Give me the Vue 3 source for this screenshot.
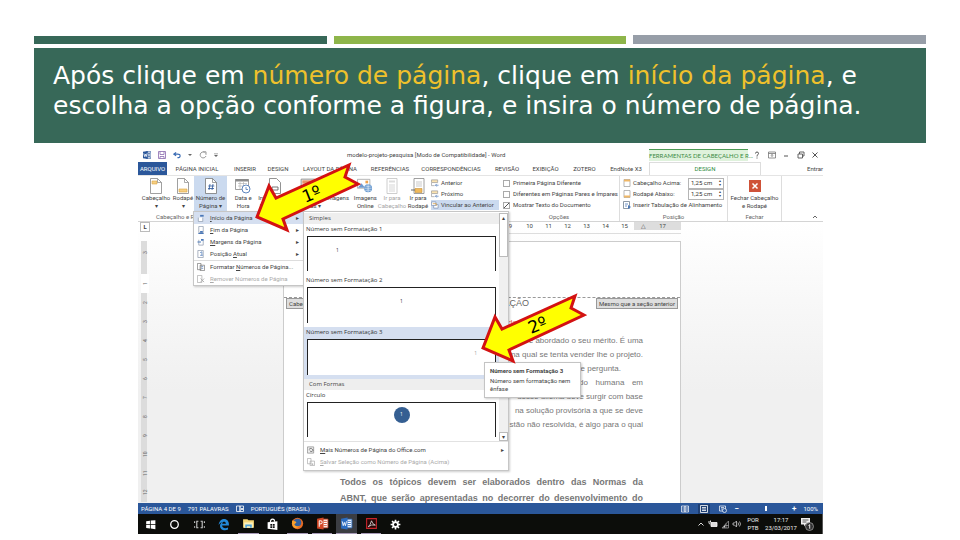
<script setup>
import { h } from 'vue'

const glyphs = {
  word: { box: '0 0 10 10', parts: [['M4 1h6v8H4z', '#fff', '#2b579a'], ['M6 3h3M6 5h3M6 7h3', 'none', '#2b579a'], ['M0 1l6-1v10L0 9z', '#2b579a'], ['M1 3l1 4 1-3 1 3 1-4', 'none', '#fff']] },
  save: { box: '0 0 8 8', parts: [['M.5.5h7v7h-7zM2 .5v3h4v-3M2 7.5v-2h4v2', 'none', '#8a6aae', .8]] },
  undo: { box: '0 0 9 8', parts: [['M3.500 1L1 3l2.500 2M1 3h4q3 0 3 2t-3 2', 'none', '#3b6cb4', 1.3]] },
  redo: { box: '0 0 8 8', parts: [['M6.500 2A3 3 0 1 0 7 5M4 .8h3v3', 'none', '#9a9a9a']] },
  caret: { box: '0 0 4 4', parts: [['M0 1h4L2 3z', '#666']] },
  more: { box: '0 0 5 5', parts: [['M0 1h5', 'none', '#666', .7], ['M0 2.500h5L2.500 5z', '#666']] },
  header: { box: '0 0 12 16', parts: [['M.5.5h7l4 4v11H.5z', '#fff', '#888', .8], ['M2 3h5v3H2z', '#f6cf83', '#dba441', .6], ['M7.500.5v4h4', 'none', '#888', .7]] },
  footer: { box: '0 0 12 16', parts: [['M.5.5h7l4 4v11H.5z', '#fff', '#888', .8], ['M2 11h8v3H2z', '#f6cf83', '#dba441', .6], ['M7.500.5v4h4', 'none', '#888', .7]] },
  number: { box: '0 0 12 16', parts: [['M.5.5h7l4 4v11H.5z', '#fff', '#777', .8], ['M7.500.5v4h4', 'none', '#777', .7], ['M5 6l-1 6M8 6l-1 6M3.300 8h6M3 10.500h6', 'none', '#2b579a', .8]] },
  date: { box: '0 0 16 16', parts: [['M.5 1.500h13v10H.5z', '#fff', '#888', .8], ['M.5 1h13v2.500H.5z', '#8b8b8b'], ['M3 5.500h9M3 8h6M5 4v7M8.500 4v7', 'none', '#aaa', .6], ['M11 7a4 4 0 1 1 0 8a4 4 0 1 1 0-8', '#fff', '#4b78b8', .9], ['M11 9v2.500h2', 'none', '#4b78b8', .8]] },
  info: { box: '0 0 12 16', parts: [['M.5.5h7l4 4v11H.5z', '#fff', '#777', .8], ['M3 9h6v3H3z', 'none', '#555', .8]] },
  parts: { box: '0 0 14 14', parts: [['M1 1h12v12H1z', '#fff', '#888', .8], ['M2 2h10v3H2z', '#e7946a'], ['M3 7h8M3 9h8M3 11h6', 'none', '#999', .6]] },
  picture: { box: '0 0 16 14', parts: [['M.5.5h14v10H.5z', '#fff', '#999', .8], ['M1 10l4-5 3 3 2-2 4 4z', '#7fb27f'], ['M10.500 2h2v2h-2z', '#f0a04b']] },
  online: { box: '0 0 18 16', parts: [['M.5.5h14v10H.5z', '#fff', '#999', .8], ['M1 10l4-5 4 5z', '#6f9ad0'], ['M9.500 2h3v3h-3z', '#f0a04b'], ['M12.500 6a4.500 4.500 0 1 1 0 9a4.500 4.500 0 1 1 0-9', '#6a9bd1'], ['M8.500 10.500h8M12.500 6v9M9.500 8q3 1 6 0M9.500 13q3-1 6 0', 'none', '#fff', .6]] },
  gotoHead: { box: '0 0 14 16', parts: [['M2 .5h10v15H2z', '#fff', '#c2c2c2', .8], ['M4 2.500h6v2H4z', '#ddd'], ['M4 7h6M4 9h6M4 11h6M4 13h6', 'none', '#ccc', .8]] },
  gotoFoot: { box: '0 0 14 16', parts: [['M3 .5h10v15H3z', '#fff', '#888', .8], ['M5 4h6M5 6h6M5 8h6', 'none', '#bbb', .8], ['M4 10.500h7v4H4z', '#f0b95a', '#c8923a', .6], ['M0 12h4', 'none', '#666']] },
  prev: { box: '0 0 9 8', parts: [['M.5.5h7v3h-7z', '#fbe3b0', '#999', .8], ['M.5 4v3H4', 'none', '#999', .8], ['M8.500 6.500H5M6.500 5L5 6.500 6.500 8', 'none', '#4b78b8', .8]] },
  link: { box: '0 0 9 8', parts: [['M.5.5h5v4h-5zM3 4.500v3h5v-4H6', '#fff', '#7f93b5', .8], ['M2 2.500h4v2.500', 'none', '#d69a3a', .8]] },
  posHead: { box: '0 0 8 8', parts: [['M1 .5h6v7H1z', '#fff', '#999', .7], ['M1 .5h6v2H1z', '#efb766']] },
  posFoot: { box: '0 0 8 8', parts: [['M1 .5h6v7H1z', '#fff', '#999', .7], ['M1 5.500h6v2H1z', '#efb766']] },
  tabAlign: { box: '0 0 8 8', parts: [['M.5.5h6v7h-6z', '#fff', '#6f7f90', .8], ['M2 3h3M2 5h2', 'none', '#4b78b8', .8], ['M5 4l3 2-3 2z', '#4b78b8']] },
  close: { box: '0 0 12 12', parts: [['M0 0h12v12H0z', '#cf5238'], ['M3.500 3.500l5 5M8.500 3.500l-5 5', 'none', '#fff', 1.5]] },
  help: { box: '0 0 8 8', parts: [['M2.500 2.500q0-1.500 1.500-1.500t1.500 1.500q0 1-1.500 2v1M4 6.500v1', 'none', '#555']] },
  ribbonOpt: { box: '0 0 8 8', parts: [['M.5 1h7v6h-7zM.5 2.500h7M4 6V3.500M3 4.500l1-1 1 1', 'none', '#666', .7]] },
  mini: { box: '0 0 8 8', parts: [['M2 5h4', 'none', '#555']] },
  restore: { box: '0 0 8 8', parts: [['M1 3h4.500v4H1zM2.500 3V1H7v4H5.500', 'none', '#555', .9]] },
  exit: { box: '0 0 8 8', parts: [['M1.500 1.500l5 5M6.500 1.500l-5 5', 'none', '#555']] },
  up: { box: '0 0 8 8', parts: [['M2 5l2-2 2 2', 'none', '#555', .9]] },
  pTop: { box: '0 0 8 9', parts: [['M1 4v4.500h5V4', '#fff', '#8a97ab', .8], ['M3 1h4v2H3z', '#4b78b8']] },
  pBottom: { box: '0 0 8 9', parts: [['M1.500.5h5v7h-5z', '#fff', '#8a97ab', .8], ['M3 5.500h3v2H3zM1 8h6v1H1z', '#4b78b8']] },
  pMargin: { box: '0 0 8 9', parts: [['M1.500 2v6h5V3', '#fff', '#8a97ab', .8], ['M0 4h4v1H0zM4 1h3v2H4z', '#4b78b8']] },
  pCurrent: { box: '0 0 8 9', parts: [['M.5.5h6v8h-6z', '#fff', '#8a97ab', .8], ['M3 3l2-1v4M3 6h3', 'none', '#4b78b8', .8]] },
  pFormat: { box: '0 0 9 9', parts: [['M.5.5h4v7h-4zM3.500 2.500h5v6h-5z', '#fff', '#777', .8], ['M5 4h2M5 6h2', 'none', '#4b78b8', .8]] },
  pRemove: { box: '0 0 9 9', parts: [['M.5.5h5v8h-5z', '#fff', '#aaa', .8], ['M4 4l4 4M8 4L4 8', 'none', '#aaa']] },
  office: { box: '0 0 9 9', parts: [['M.5 1h7v7h-7z', '#eee', '#888', .8], ['M2 4q3-3 5 1M7 5q-3 3-4 0', 'none', '#666', .9]] },
  saveSel: { box: '0 0 9 9', parts: [['M.5.5h4v6h-4zM3.500 3.500h5v5h-5z', '#fff', '#aaa', .8], ['M5 6h2v2H5z', '#bbb']] },
  proof: { box: '0 0 8 8', parts: [['M.5 1h3.500v5.500H.5zM4 1h3.500v5.500H4zM5 3l2 2M7 3L5 5', 'none', '#fff', .8]] },
  read: { box: '0 0 8 8', parts: [['M.5 1h3.500v6H.5zM4 1h3.500v6H4zM1.500 3h2M1.500 5h2M5 3h2M5 5h2', 'none', '#fff', .7]] },
  print: { box: '0 0 8 8', parts: [['M.5.5h7v7h-7zM2 2.500h4M2 4h4M2 5.500h4', 'none', '#fff', .8]] },
  web: { box: '0 0 8 8', parts: [['M.5 1h6v5h-6zM2 2.500h3M2 4h2', 'none', '#fff', .7], ['M5.500 3.500a2 2 0 1 1 0 4a2 2 0 1 1 0-4', '#2b579a', '#fff', .7]] },
  windows: { box: '0 0 12 12', parts: [['M2 3l3.500-.5V5.700H2zM6.200 2.300L10.500 2v3.700H6.200zM2 6.400h3.500v3.300L2 9.200zM6.200 6.400h4.300V10.300L6.200 9.800z', '#fff']] },
  cortana: { box: '0 0 12 12', parts: [['M6 2.500a3.500 3.500 0 1 1 0 7a3.500 3.500 0 1 1 0-7', 'none', '#fff', 1.2]] },
  task: { box: '0 0 12 12', parts: [['M5 3H3.500v6H5M7 3h1.500v6H7M1.500 3v1.500M1.500 7.500V9M10.500 3v1.500M10.500 7.500V9', 'none', '#ccc', 1]] },
  edge: { box: '0 0 12 12', parts: [['M1.500 6.500C2 2.500 4.500 1 6.500 1 9.500 1 11 3.300 11 6v1H4.700c.2 2.500 3.300 3 5.500 1.700v2C6.500 12.500 2.500 10.500 2.800 7 2.900 5.500 3.800 4.500 5 4c-1.500.2-2.700 1-3.500 2.500zM4.800 5.200h3.400C8.100 3 5 3 4.800 5.200z', '#2388d8']] },
  folder: { box: '0 0 12 12', parts: [['M1 2h4l1 1h5v7H1z', '#f5d576'], ['M2 5h8v5H2z', '#fff2bd'], ['M3 7h6v3H7.500V8.500h-3V10H3z', '#4fa3d9']] },
  store: { box: '0 0 12 12', parts: [['M1.500 4l9-1v8l-9-1z', '#fff'], ['M4 4q0-3 2-3t2 2.500', 'none', '#fff', 1], ['M4 5.500h1.700v1.700H4zM6.300 5.500H8v1.700H6.300zM4 7.700h1.700v1.500H4zM6.300 7.700H8v1.500H6.300z', '#111']] },
  firefox: { box: '0 0 12 12', parts: [['M6 .8a5.200 5.200 0 1 1 0 10.400A5.200 5.200 0 1 1 6 .8', '#e66b24'], ['M6 1.500a3.500 3.500 0 1 1 0 7a3.500 3.500 0 1 1 0-7', '#315f9e'], ['M1 3q1 1 3 1l1 1-2 2q2 3 5 1-2 3-5 2Q.5 8 1 3z', '#f7a02d']] },
  ppt: { box: '0 0 12 12', parts: [['M6 2h5v8H6z', '#fff', '#d24726', .8], ['M7 4h3M7 6h3M7 8h3', 'none', '#d24726', .8], ['M1 1.500l6-1v11l-6-1z', '#d24726'], ['M3 9V3.500h1.500q1.200 0 1.200 1.400T4.500 6.300H3', 'none', '#fff', .9]] },
  wordBig: { box: '0 0 12 12', parts: [['M6 2h5v8H6z', '#fff', '#2b6cc0', .8], ['M7 4h3M7 6h3M7 8h3', 'none', '#2b6cc0', .8], ['M1 1.500l6-1v11l-6-1z', '#2b6cc0'], ['M2 4l1 4 1-3 1 3 1-4', 'none', '#fff', .8]] },
  acrobat: { box: '0 0 12 12', parts: [['M1.500 1.500h9v9h-9z', '#240606', '#c8252b', 1], ['M3 9q2-1.500 3-5.500Q7 7 9.500 7.500 6 6.500 3 9', 'none', '#eee', .7]] },
  gear: { box: '0 0 12 12', parts: [['M6 1.500v9M1.500 6h9M2.800 2.800l6.400 6.400M9.200 2.800L2.800 9.200', 'none', '#fff', 1.5], ['M6 3a3 3 0 1 1 0 6a3 3 0 1 1 0-6', '#fff'], ['M6 4.600a1.400 1.400 0 1 1 0 2.800a1.400 1.400 0 1 1 0-2.800', '#111']] },
  chevron: { box: '0 0 10 10', parts: [['M2.500 6.500L5 4l2.500 2.500', 'none', '#ddd', 1]] },
  battery: { box: '0 0 10 10', parts: [['M3 3.500h6v4H3z', '#ddd', '#fff', .8], ['M1 2v2q0 1 1.500 1M2.500 1.500v2', 'none', '#fff', .9]] },
  wifi: { box: '0 0 10 10', parts: [['M2 9L8.500 2v7z', 'none', '#999', .8], ['M3 8.500l2-2.200V8.500z', '#ddd'], ['M6 4.500V9M4.500 6.500h4', 'none', '#aaa', .7]] },
  sound: { box: '0 0 10 10', parts: [['M1 4h1.500L4.500 2v6L2.500 6H1zM6 3.500q1 1.500 0 3M7.500 2.500q2 2.500 0 5', 'none', '#ccc', .8]] },
  notify: { box: '0 0 14 14', parts: [['M1 1h9v6.500H5.500L4 9.500v-2H1z', '#eee'], ['M2.500 3h6M2.500 5h4', 'none', '#333', .8], ['M9.500 5.500a4 4 0 1 1 0 8a4 4 0 1 1 0-8', '#333', '#aaa', .7], ['M8.500 8.500l1.200-.8v4', 'none', '#fff', .9]] }
}

const Icon = (props) => {
  const g = glyphs[props.name]
  return h('svg', { viewBox: g.box, class: 'icon', 'aria-hidden': 'true' },
    g.parts.map(([d, fill, stroke, width]) =>
      h('path', { d, fill, stroke: stroke || 'none', 'stroke-width': width || 1 })))
}
Icon.props = ['name']

const tabs = ['PÁGINA INICIAL', 'INSERIR', 'DESIGN', 'LAYOUT DA PÁGINA', 'REFERÊNCIAS', 'CORRESPONDÊNCIAS', 'REVISÃO', 'EXIBIÇÃO', 'ZOTERO', 'EndNote X3']
const insertTools = [
  { icon: 'date', top: 'Data e', bottom: 'Hora' },
  { icon: 'info', top: 'Informações', bottom: 'Documento' },
  { icon: 'parts', top: 'Partes', bottom: 'Rápidas ▾' },
  { icon: 'picture', top: 'Imagens', bottom: '' },
  { icon: 'online', top: 'Imagens', bottom: 'Online' }
]
const options = [
  { id: 'opt-first', text: 'Primeira Página Diferente', on: false },
  { id: 'opt-even', text: 'Diferentes em Páginas Pares e Ímpares', on: false },
  { id: 'opt-show', text: 'Mostrar Texto do Documento', on: true }
]
const menu = [
  { icon: 'pTop', key: 'I', text: 'nício da Página', sub: true, cls: 'chosen' },
  { icon: 'pBottom', key: 'F', text: 'im da Página', sub: true },
  { icon: 'pMargin', key: 'M', text: 'argens da Página', sub: true },
  { icon: 'pCurrent', pre: 'Posição ', key: 'A', text: 'tual', sub: true },
  { icon: 'pFormat', pre: 'Formatar ', key: 'N', text: 'úmeros de Página...', cls: 'ruled' },
  { icon: 'pRemove', key: 'R', text: 'emover Números de Página', cls: 'off' }
]
const samples = [
  { name: 'Número sem Formatação 1', cls: 'at-left' },
  { name: 'Número sem Formatação 2', cls: 'at-mid' },
  { name: 'Número sem Formatação 3', cls: 'at-right' }
]
const bodyLines = [
  { text: 'é abordado o seu mérito. É uma' },
  { text: 'na qual se tenta vender lhe o projeto.' },
  { text: 'e pergunta.', cls: 'short' },
  { text: 'do humana em', cls: 'spread' },
  { text: 'desse dilema deve surgir com base' },
  { text: 'na solução provisória a que se deve' },
  { text: 'stão não resolvida, é algo para o qual' }
]
const apps = ['windows', 'cortana', 'task', 'edge', 'folder', 'store', 'firefox', 'ppt', 'wordBig', 'acrobat', 'gear']
const openApps = ['folder', 'firefox', 'ppt', 'wordBig', 'acrobat']
const arrowPoints = '2,55 14,24 21,36 94,3 90,15 103,22 28,57 32,68'
</script>

<template>
  <main class="slide">
    <div class="stripes"><i class="s1"></i><i class="s2"></i><i class="s3"></i></div>
    <header class="banner">
      <h1>Após clique em <em>número de página</em>, clique em <em>início da página</em>, e<br>escolha a opção conforme a figura, e insira o número de página.</h1>
    </header>

    <section class="screen">
      <div class="titlebar">
        <div class="quick">
          <Icon name="word" /><Icon name="save" /><Icon name="undo" /><Icon name="caret" class="small" /><Icon name="redo" /><Icon name="more" class="small" />
        </div>
        <div class="doc-name">modelo-projeto-pesquisa [Modo de Compatibilidade] - Word</div>
        <div class="context">FERRAMENTAS DE CABEÇALHO E R...</div>
        <div class="window-tools"><Icon name="help" /><Icon name="ribbonOpt" /><Icon name="mini" /><Icon name="restore" /><Icon name="exit" /></div>
      </div>

      <nav class="tabs">
        <button class="file">ARQUIVO</button>
        <button v-for="t in tabs" :key="t">{{ t }}</button>
        <button class="active">DESIGN</button>
        <a href="#entrar">Entrar</a>
      </nav>

      <div class="ribbon">
        <div class="group">
          <div class="tools head-tools">
            <button class="big"><Icon name="header" /><span>Cabeçalho</span><span>▾</span></button>
            <button class="big"><Icon name="footer" /><span>Rodapé</span><span>▾</span></button>
            <button class="big lit"><Icon name="number" /><span>Número de</span><span>Página ▾</span></button>
          </div>
          <div class="caption">Cabeçalho e Rodapé</div>
        </div>
        <div class="group">
          <div class="tools insert-tools">
            <button v-for="(t, i) in insertTools" :key="i" class="big"><Icon :name="t.icon" /><span>{{ t.top }}</span><span>{{ t.bottom }}</span></button>
          </div>
        </div>
        <div class="group">
          <div class="tools nav-tools">
            <button class="big dim" disabled><Icon name="gotoHead" /><span>Ir para</span><span>Cabeçalho</span></button>
            <button class="big"><Icon name="gotoFoot" /><span>Ir para</span><span>Rodapé</span></button>
            <div class="stack">
              <button><Icon name="prev" />Anterior</button>
              <button><Icon name="prev" />Próximo</button>
              <button class="lit"><Icon name="link" />Vincular ao Anterior</button>
            </div>
          </div>
        </div>
        <div class="group">
          <div class="tools stack checks">
            <label v-for="o in options" :key="o.id" :for="o.id"><input :id="o.id" type="checkbox" :checked="o.on">{{ o.text }}</label>
          </div>
          <div class="caption">Opções</div>
        </div>
        <div class="group lined">
          <div class="tools stack place">
            <div class="measure"><Icon name="posHead" /><label for="m-top">Cabeçalho Acima:</label><span class="spin"><input id="m-top" type="text" value="1,25 cm"><i>▴<br>▾</i></span></div>
            <div class="measure"><Icon name="posFoot" /><label for="m-bottom">Rodapé Abaixo:</label><span class="spin"><input id="m-bottom" type="text" value="1,25 cm"><i>▴<br>▾</i></span></div>
            <button><Icon name="tabAlign" />Inserir Tabulação de Alinhamento</button>
          </div>
          <div class="caption">Posição</div>
        </div>
        <div class="group lined">
          <div class="tools single"><button class="big end"><Icon name="close" /><span>Fechar Cabeçalho</span><span>e Rodapé</span></button></div>
          <div class="caption">Fechar</div>
        </div>
        <div class="group lined fold"><Icon name="up" /></div>
      </div>

      <div class="workspace">
        <div class="v-ruler">
          <span class="corner">L</span>
          <div class="v-scale"><span class="cap">3</span><span class="gap white"></span><span class="white">1</span><span v-for="n in 11" :key="n">{{ n + 1 }}</span></div>
        </div>
        <div class="paper-column">
          <div class="h-ruler"><span>9</span><span>10</span><span>11</span><span>12</span><span>13</span><span>14</span><span>15</span><span class="edge">△</span><span class="edge">17</span><span class="edge rest"></span></div>
          <article class="paper">
            <div class="page-head"><span class="tag">Cabeçalho</span><span class="tag">Mesmo que a seção anterior</span></div>
            <h2>AÇÃO</h2>
            <p class="note">do</p>
            <div class="body"><p v-for="l in bodyLines" :key="l.text" :class="l.cls">{{ l.text }}</p></div>
            <div class="strong">
              <p>Todos os tópicos devem ser elaborados dentro das Normas da</p>
              <p>ABNT, que serão apresentadas no decorrer do desenvolvimento do</p>
            </div>
          </article>
        </div>
      </div>

      <footer class="status">
        <span>PÁGINA 4 DE 9</span><span>791 PALAVRAS</span><Icon name="proof" /><span>PORTUGUÊS (BRASIL)</span>
        <div class="views"><Icon name="read" /><span class="on"><Icon name="print" /></span><Icon name="web" /></div>
        <div class="zoom"><b>−</b><i></i><b>+</b></div>
        <span class="percent">100%</span>
      </footer>

      <div class="taskbar">
        <div class="apps"><button v-for="a in apps" :key="a" :aria-label="a" :class="{ open: openApps.includes(a), front: a === 'wordBig' }"><Icon :name="a" /></button></div>
        <div class="tray">
          <Icon name="chevron" /><Icon name="battery" /><Icon name="wifi" /><Icon name="sound" />
          <span class="lang">POR<br>PTB</span><span class="clock">17:17<br>23/03/2017</span><Icon name="notify" class="bell" />
        </div>
      </div>

      <div class="menu">
        <button v-for="m in menu" :key="m.icon" :class="m.cls"><Icon :name="m.icon" /><span>{{ m.pre }}<u>{{ m.key }}</u>{{ m.text }}</span><b v-if="m.sub">▸</b></button>
      </div>

      <div class="gallery">
        <div class="gallery-view">
          <div class="samples">
            <div class="band">Simples</div>
            <button v-for="s in samples" :key="s.name" class="sample" :class="s.cls"><span>{{ s.name }}</span><span class="sheet"><i>1</i></span></button>
            <div class="band">Com Formas</div>
            <button class="sample shape"><span>Círculo</span><span class="sheet"><i>1</i></span></button>
          </div>
          <div class="scroll"><span class="thumb">▴</span><span class="down">▾</span></div>
        </div>
        <div class="gallery-foot">
          <button><Icon name="office" /><span><u>M</u>ais Números de Página do Office.com</span><b>▸</b></button>
          <button class="off"><Icon name="saveSel" /><span><u>S</u>alvar Seleção como Número de Página (Acima)</span></button>
        </div>
      </div>

      <div class="tooltip"><strong>Número sem Formatação 3</strong><span>Número sem formatação nem ênfase</span></div>

      <div class="arrow first"><svg viewBox="0 0 106 72"><polygon :points="arrowPoints" /></svg><span>1º</span></div>
      <div class="arrow second"><svg viewBox="0 0 106 72"><polygon :points="arrowPoints" /></svg><span>2º</span></div>
    </section>
  </main>
</template>

<style>
body { margin: 0; background: #fff; }
</style>

<style scoped>
* { box-sizing: border-box; }
.slide { padding: 35px 34px 6px; font-family: Roboto, "Noto Sans", sans-serif; }
.stripes { display: grid; grid-template-columns: repeat(3, 1fr); gap: 7px; align-items: end; height: 9px; }
.stripes i { height: 8px; }
.s1 { background: #376858; }
.s2 { background: #8eb54a; }
.stripes .s3 { background: #979ea8; height: 9px; }
.banner { background: #376858; margin-top: 4px; height: 95px; padding: 13px 19px; }
h1 { margin: 0; font: 400 25px/30px "DejaVu Sans", Verdana, sans-serif; color: #fff; white-space: nowrap; }
h1 em { font-style: normal; color: #efc12c; }

.screen { position: relative; margin: 5px 103px 0 104px; font-size: 6px; line-height: 8px; color: #444; white-space: nowrap; }
button { border: 0; background: none; padding: 0; margin: 0; font: inherit; color: inherit; white-space: nowrap; }
.icon { display: block; flex: none; width: 8px; height: 8px; }

.titlebar { display: grid; grid-template-columns: 209fr 302fr 99fr 75fr; height: 14px; align-items: center; }
.titlebar > * { min-width: 0; }
.quick { display: flex; align-items: center; gap: 7px; padding-left: 5px; }
.quick .small { width: 4px; height: 4px; }
.context { height: 12px; padding: 2px 0; border-top: 1px solid #4c9a55; background: #dff2dc; color: #3c8a45; text-align: center; font-family: "Liberation Sans Narrow", Lato, sans-serif; }
.window-tools { display: flex; justify-content: space-between; padding: 0 4px 0 5px; }

.tabs { display: grid; grid-template-columns: 29fr 60fr 36fr 30fr 74fr 46fr 76fr 36fr 41fr 37fr 46fr 112fr 62fr; height: 13px; align-items: stretch; }
.tabs > * { min-width: 0; display: flex; align-items: center; justify-content: center; }
.tabs .file { background: #2b579a; color: #fff; }
.tabs .active { border: 1px solid #ddd; border-bottom: 0; color: #2f8a40; }
.tabs a { color: #444; text-decoration: none; justify-content: flex-end; }

.ribbon { display: grid; grid-template-columns: 91fr 150fr 120fr 120fr 108fr 54fr 42fr; height: 47px; border-bottom: 1px solid #d4d4d4; border-top: 1px solid #e4e4e4; }
.group { display: flex; flex-direction: column; min-width: 0; }
.lined { border-left: 1px solid #ddd; }
.tools { height: 37px; }
.caption { text-align: center; color: #666; }
.head-tools { display: grid; grid-template-columns: 32fr 22fr 33fr; padding-left: 2px; padding-right: 2px; }
.insert-tools { display: grid; grid-template-columns: 28fr 35fr 30fr 28fr 27fr; }
.nav-tools { display: grid; grid-template-columns: 26fr 26fr 68fr; }
.big { display: flex; flex-direction: column; align-items: center; padding-top: 2px; min-width: 0; }
.big .icon { width: 16px; height: 16px; }
.lit { background: #cbdaef; }
.dim { color: #a5a5a5; }
.stack { display: flex; flex-direction: column; gap: 1px; padding-top: 2px; }
.stack > * { display: flex; align-items: center; gap: 2px; height: 10px; }
.checks { padding-left: 4px; }
.checks input { appearance: none; flex: none; width: 7px; height: 7px; margin: 0 1px 0 0; border: 1px solid #aaa; background: #fff; }
.checks input:checked { background: linear-gradient(135deg, transparent 42%, #555 42%, #555 58%, transparent 58%) #fff; }
.place { padding-left: 3px; padding-right: 3px; }
.measure label { flex: 1; }
.spin { display: flex; width: 36px; height: 11px; border: 1px solid #b5b5b5; align-items: center; }
.spin input { flex: 1; min-width: 0; border: 0; padding: 0 2px; font: inherit; color: #333; height: 8px; }
.spin i { font: 4px/4px "DejaVu Sans", sans-serif; padding-right: 2px; }
.end { width: 100%; }
.end .icon { width: 12px; height: 12px; margin: 2px 0; }
.fold { align-items: flex-end; justify-content: flex-end; padding-right: 4px; }

.workspace { display: grid; grid-template-columns: minmax(0, 145fr) minmax(0, 398fr) minmax(0, 142fr); height: 281px; background: linear-gradient(#fff, #f0f0f0 60%); overflow: hidden; }
.v-ruler { padding-left: 2px; }
.corner { display: block; width: 10px; height: 10px; border: 1px solid #bbb; text-align: center; font-weight: 700; line-height: 7px; margin-bottom: 9px; }
.v-scale { width: 6px; margin-left: 1px; font-size: 5px; color: #666; background: #dcdcdc; }
.v-scale span { display: grid; place-items: center; height: 19px; writing-mode: vertical-rl; transform: rotate(180deg); }
.v-scale .cap { height: 24px; align-items: end; }
.v-scale .gap { height: 9px; }
.v-scale .white { background: #fff; }
.paper-column { display: flex; flex-direction: column; }
.h-ruler { height: 12px; display: flex; justify-content: flex-end; border-bottom: 1px solid #ddd; }
.h-ruler span { width: 19px; text-align: center; height: 8px; }
.h-ruler .edge { background: #ddd; }
.h-ruler .rest { width: 9px; }
.paper { margin-top: 7px; height: 262px; background: #fff; border: 1px solid #ccc; border-bottom: 0; padding: 0 37px 0 56px; font-family: "Liberation Sans", Arial, sans-serif; color: #777; }
.page-head { margin: 55px -37px 0 -56px; border-top: 1px dashed #999; display: flex; justify-content: space-between; padding: 0 2px; font-family: Roboto, sans-serif; }
.tag { border: 1px solid #999; background: #dedede; color: #444; padding: 0 2px; height: 11px; line-height: 9px; }
h2 { margin: -11px 114px 0 0; font-size: 9px; line-height: 11px; font-weight: 400; text-align: right; color: #666; }
.note { margin: 9px 126px 0 0; text-align: right; color: #e05a4e; font-size: 8px; line-height: 10px; }
.body { margin: 6px 0 0; font-size: 8px; line-height: 14px; }
.body p { margin: 0; text-align: right; }
.body .short { padding-right: 22px; }
.body .spread { width: 64px; margin-left: auto; text-align-last: justify; white-space: normal; }
.strong { margin-top: 42px; font-size: 9px; line-height: 16px; font-weight: 700; }
.strong p { margin: 0; white-space: normal; text-align-last: justify; }

.status { display: flex; align-items: center; gap: 7px; height: 11px; padding: 0 5px 0 3px; background: #2b579a; color: #fff; }
.views { display: flex; gap: 9px; align-items: center; margin-left: auto; }
.views .on { background: #1e3f73; padding: 1px 2px; }
.zoom { display: flex; width: 62px; align-items: center; justify-content: space-between; font-size: 8px; }
.zoom i { width: 2px; height: 5px; background: #fff; }

.taskbar { display: flex; justify-content: space-between; height: 20px; background: #0c0d0a; color: #eee; border-right: 1px solid #555; }
.apps { display: grid; grid-template-columns: repeat(11, 1fr); width: 270px; }
.apps button { margin: 0 2px; display: grid; place-items: center; }
.apps .icon { width: 13px; height: 13px; }
.apps .open { border-bottom: 1px solid #a89bb8; }
.apps .front { background: #3b3d42; }
.tray { display: flex; align-items: center; gap: 2px; padding-right: 8px; }
.tray .icon { width: 10px; height: 10px; }
.tray .bell { width: 14px; height: 14px; }
.lang { width: 18px; text-align: center; }
.clock { width: 34px; text-align: center; }

.menu { position: absolute; left: 55px; top: 63px; width: 111px; border: 1px solid #c6c6c6; background: #fff; box-shadow: 1px 1px 2px #0003; }
.menu button, .gallery-foot button { display: flex; align-items: center; width: 100%; height: 12px; gap: 5px; padding: 0 4px 0 3px; text-align: left; }
.menu button span, .gallery-foot button span { flex: 1; }
.menu b, .gallery-foot b { font: 6px/8px "DejaVu Sans", sans-serif; }
.menu .chosen { background: #d5dff0; }
.menu .ruled { border-top: 1px solid #ddd; height: 13px; }
.off { color: #aaa; }

.gallery { position: absolute; left: 165px; top: 63px; width: 206px; border: 1px solid #c6c6c6; background: #fff; box-shadow: 1px 1px 2px #0003; }
.gallery-view { display: flex; padding-top: 1px; height: 229px; font-family: "Open Sans", sans-serif; }
.samples { flex: 1; }
.band { height: 11px; padding: 1px 5px; background: #eee; }
.sample { display: flex; flex-direction: column; width: 100%; height: 51px; padding: 1px 3px 4px 2px; text-align: left; color: #333; }
.sample + .sample { height: 52px; }
.sheet { display: flex; flex: 1; margin: 3px 0 0 1px; border: 1px solid #222; border-bottom: 0; background: #fff; padding: 9px 28px; font-size: 5px; line-height: 8px; }
.sheet i { font-style: normal; }
.at-mid .sheet, .shape .sheet { justify-content: center; }
.at-right { background: #d5dff0; }
.at-right .sheet { justify-content: flex-end; padding-right: 18px; color: #999; }
.shape .sheet { padding-top: 4px; }
.shape i { width: 16px; height: 16px; border-radius: 50%; background: #355f92; color: #fff; text-align: center; line-height: 15px; }
.scroll { width: 9px; background: #f0f0f0; display: flex; flex-direction: column; justify-content: space-between; text-align: center; font-family: "DejaVu Sans", sans-serif; }
.thumb { height: 44px; border: 1px solid #bbb; background: #fff; }
.down { height: 9px; border: 1px solid #bbb; background: #fff; line-height: 7px; }
.gallery-foot { padding: 2px 0; border-top: 1px solid #e2e2e2; }

.tooltip { position: absolute; left: 346px; top: 214px; width: 97px; padding: 4px 5px; display: flex; flex-direction: column; gap: 2px; background: #fff; border: 1px solid #c4c4c4; box-shadow: 1px 1px 2px #0003; white-space: normal; }
.arrow { position: absolute; width: 106px; height: 72px; }
.arrow svg { display: block; width: 100%; height: 100%; }
.arrow polygon { fill: #ff0; stroke: #d31212; stroke-width: 3; }
.arrow span { position: absolute; left: 47px; top: 21px; font: 17px/22px "DejaVu Sans", sans-serif; color: #000; transform: rotate(-22deg); }
.first { left: 117px; top: 14px; }
.second { left: 343px; top: 145px; }
</style>
